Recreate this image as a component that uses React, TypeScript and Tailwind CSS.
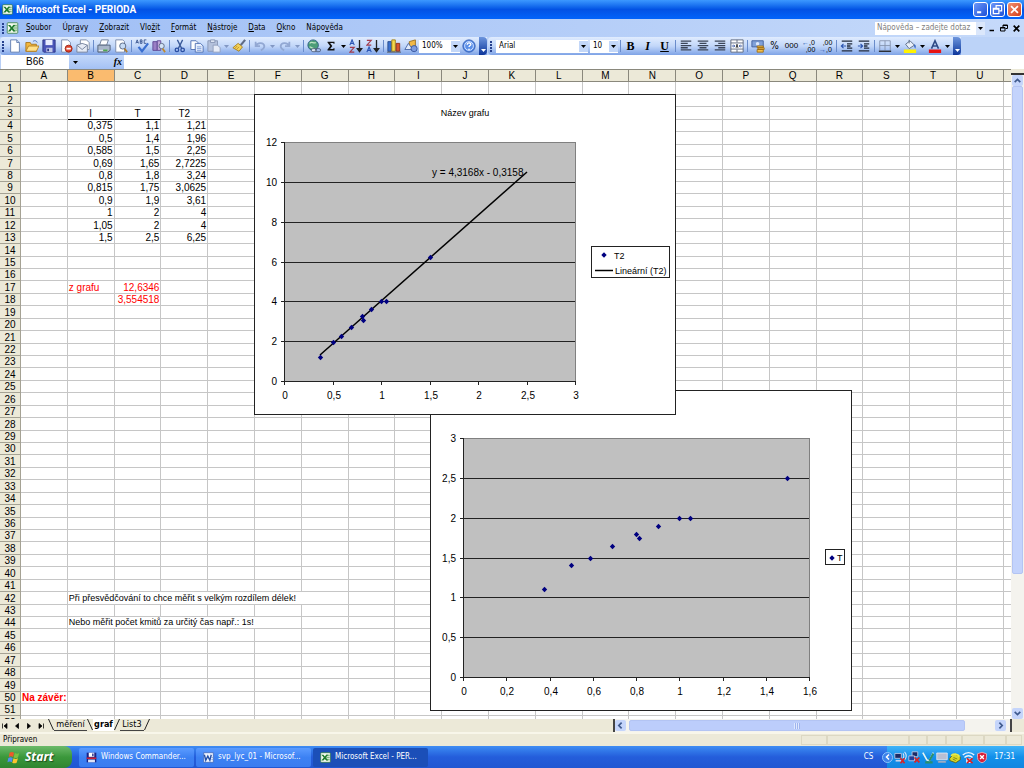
import React from 'react';

const UI = "font-['DejaVu_Sans_Condensed','Noto_Sans',sans-serif]";
const SHEET = "font-['Liberation_Sans',sans-serif]";

const columns = 'ABCDEFGHIJKLMNOPQRSTU'.split('');
const ROW_COUNT = 52;
const ROW_PITCH = 12.43;

interface Cell {
    text: string;
    span?: number;
    className?: string;
}

const measurements = [
    ['0,375', '1,1', '1,21'],
    ['0,5', '1,4', '1,96'],
    ['0,585', '1,5', '2,25'],
    ['0,69', '1,65', '2,7225'],
    ['0,8', '1,8', '3,24'],
    ['0,815', '1,75', '3,0625'],
    ['0,9', '1,9', '3,61'],
    ['1', '2', '4'],
    ['1,05', '2', '4'],
    ['1,5', '2,5', '6,25'],
];

const cells: Record<string, Cell> = {
    B3: { text: 'l', className: 'text-center border-b-black' },
    C3: { text: 'T', className: 'text-center border-b-black' },
    D3: { text: 'T2', className: 'text-center' },
    B17: { text: 'z grafu', className: 'text-left text-[#f00]' },
    C17: { text: '12,6346', className: 'text-right text-[#f00]' },
    C18: { text: '3,554518', className: 'text-right text-[#f00]' },
    B42: { text: 'Při přesvědčování to chce měřit s velkým rozdílem délek!', span: 6, className: 'text-left text-[9px]' },
    B44: { text: 'Nebo měřit počet kmitů za určitý čas např.: 1s!', span: 5, className: 'text-left text-[9px]' },
    A50: { text: 'Na závěr:', className: 'text-left font-bold text-[#f00]' },
};

measurements.forEach((row, i) => {
    row.forEach((text, j) => {
        cells[`${columns[j + 1]}${i + 4}`] = { text, className: 'text-right' };
    });
});

const toNumber = (s: string) => parseFloat(s.replace(',', '.'));
const toLabel = (n: number) => String(Math.round(n * 10) / 10).replace('.', ',');

/* ---------- toolbar icons, 16x16 grid ---------- */

const Icon = ({ children, className = 'w-[14px] h-[14px]' }: { children: React.ReactNode; className?: string }) => (
    <svg viewBox="0 0 16 16" className={className} fill="none" aria-hidden="true">
        {children}
    </svg>
);

const ExcelIcon = ({ className }: { className?: string }) => (
    <Icon className={className}>
        <rect x="1" y="1" width="14" height="14" rx="1" fill="#f3faf0" stroke="#2d7a38" />
        <path d="M9 3h5v10H9z" fill="#cfe6cc" />
        <path d="M9 5h5M9 8h5M9 11h5" stroke="#5ba05e" />
        <path d="M2 4h3l2 2.500L9 4h3L8.500 8l3.500 4.500H9L7 10l-2 2.500H2L5.500 8z" fill="#1c7a2b" />
    </Icon>
);

const icons: Record<string, React.ReactNode> = {
    'Nový': (
        <>
            <path d="M3 1h7l3 3v11H3z" fill="#fff" stroke="#5d79ad" />
            <path d="M10 1v3h3" fill="#cfdcf5" stroke="#5d79ad" />
        </>
    ),
    'Otevřít': (
        <>
            <path d="M1 4h5l1 2h6v8H1z" fill="#f2b63c" stroke="#a8741a" />
            <path d="M4 8h12l-3 6H1z" fill="#ffe08a" stroke="#b27e1e" />
            <path d="M9 3c2-2 4-1 5 1" stroke="#3c66b8" />
        </>
    ),
    'Uložit': (
        <>
            <path d="M1 1h14v14H2l-1-1z" fill="#4a55b8" stroke="#2b3384" />
            <path d="M4 1h8v6H4z" fill="#e9edff" />
            <path d="M5 10h7v5H5z" fill="#c2c9e8" />
            <path d="M6 11h2v3H6z" fill="#2b3384" />
        </>
    ),
    'Oprávnění': (
        <>
            <path d="M3 1h7l3 3v11H3z" fill="#fff" stroke="#7485a8" />
            <circle cx="11" cy="11" r="4" fill="#e0442c" stroke="#9c2414" />
            <path d="M8.500 11h5" stroke="#fff" strokeWidth="2" />
        </>
    ),
    'E-mail': (
        <>
            <path d="M5 1h7l3 3v8H5z" fill="#fff" stroke="#7c89a3" />
            <path d="M1 7l6-2 6 2v8H1z" fill="#e6ebf5" stroke="#6f7d98" />
            <path d="M1 7l6 5 6-5" stroke="#6f7d98" />
        </>
    ),
    'Tisk': (
        <>
            <path d="M5 1h8l-2 6H3z" fill="#fff" stroke="#6b7a94" />
            <path d="M1 7h14v6l-3 2H1z" fill="#a9b6c9" stroke="#4d5b73" />
            <path d="M2 13h10" stroke="#e9eef7" />
            <path d="M7 12h5v2H7z" fill="#4fa650" />
        </>
    ),
    'Náhled': (
        <>
            <path d="M2 1h8l2 2v12H2z" fill="#fff" stroke="#7485a8" />
            <circle cx="10" cy="8" r="3.500" fill="#c7dcf5" stroke="#51617f" />
            <path d="M12 11l3 4" stroke="#ad7a2b" strokeWidth="2" />
        </>
    ),
    'Pravopis': (
        <>
            <path d="M1 5l1.500-4L4 5M1.500 4h2M6 1v4h2V3H6M8 3V1H6M13 1h-2.500v4H13" stroke="#38538f" strokeWidth="1" />
            <path d="M4 9l4 5 7-9" stroke="#3a6fd0" strokeWidth="2.500" />
        </>
    ),
    'Zdroje informací': (
        <>
            <path d="M1 3h5v10H1z" fill="#9a7fc5" stroke="#5c4592" />
            <path d="M6 2h4v11H6z" fill="#c0a8dc" stroke="#5c4592" />
            <circle cx="11" cy="8" r="3" fill="#d4e4f8" stroke="#5a6883" />
            <path d="M12 11l3 4" stroke="#c08a2e" strokeWidth="2" />
        </>
    ),
    'Vyjmout': (
        <>
            <path d="M5 1l5 10M11 1L6 11" stroke="#3a5a99" strokeWidth="1.500" />
            <circle cx="4.500" cy="12.500" r="2" stroke="#2b4fa3" strokeWidth="1.500" />
            <circle cx="11" cy="12.500" r="2" stroke="#2b4fa3" strokeWidth="1.500" />
        </>
    ),
    'Kopírovat': (
        <>
            <path d="M1 2h6l2 2v8H1z" fill="#fff" stroke="#4a6bb0" />
            <path d="M6 5h6l3 3v7H6z" fill="#e7effd" stroke="#4a6bb0" />
            <path d="M8 9h5M8 11h5M8 13h5" stroke="#7c9ad6" />
        </>
    ),
    'Vložit': (
        <>
            <path d="M1 2h11v12H1z" fill="#b4c1dc" stroke="#8795b5" />
            <path d="M4 1h5v3H4z" fill="#dbe3f2" stroke="#8795b5" />
            <path d="M7 7h5l3 3v5H7z" fill="#e7ecf8" stroke="#8f9dbb" />
        </>
    ),
    'Kopírovat formát': (
        <>
            <path d="M15 1l-5 6" stroke="#5e6b86" strokeWidth="2.500" />
            <path d="M7 5l5 4-4 5-7-4z" fill="#f4d35a" stroke="#a47c1d" />
            <path d="M3 11l3-3M5 12l3-3" stroke="#b98d26" />
        </>
    ),
    'Zpět': <path d="M3 3v5h5M3 8c2-4 9-5 10 0 0 3-2 4-4 5" stroke="#92a8d3" strokeWidth="2" />,
    'Znovu': <path d="M13 3v5H8M13 8C11 4 4 3 3 8c0 3 2 4 4 5" stroke="#92a8d3" strokeWidth="2" />,
    'Hypertextový odkaz': (
        <>
            <circle cx="7" cy="7" r="6" fill="#4c9d78" stroke="#2b5f84" />
            <path d="M3 5c3-3 4 1 7-1M3 9c2 0 3 2 5 2" stroke="#bfe3c4" strokeWidth="1.500" />
            <rect x="5" y="11" width="6" height="3.500" rx="1.700" fill="#dfe7f5" stroke="#4f5f7d" />
            <rect x="9.500" y="11" width="6" height="3.500" rx="1.700" stroke="#4f5f7d" />
        </>
    ),
    'AutoSum': <path d="M4 3h8v2.500h-1L10.500 4.500H7L9.500 8 7 11.500h3.500l.5-1h1V13H4v-1l3-4-3-4z" fill="#111" />,
    'Seřadit vzestupně': (
        <>
            <path d="M1 7l2.500-6L6 7M2 5h3" stroke="#2c56b5" strokeWidth="1.300" />
            <path d="M1 9.500h5L1 15h5" stroke="#a33b4c" strokeWidth="1.300" />
            <path d="M12 1v12M9.500 11l2.500 3.500L14.500 11z" stroke="#222" strokeWidth="1.500" fill="#222" />
        </>
    ),
    'Seřadit sestupně': (
        <>
            <path d="M1 1.500h5L1 7h5" stroke="#a33b4c" strokeWidth="1.300" />
            <path d="M1 15l2.500-6L6 15M2 13h3" stroke="#2c56b5" strokeWidth="1.300" />
            <path d="M12 1v12M9.500 11l2.500 3.500L14.500 11z" stroke="#222" strokeWidth="1.500" fill="#222" />
        </>
    ),
    'Průvodce grafem': (
        <>
            <path d="M1 3h4v11H1z" fill="#3c72cf" stroke="#234889" />
            <path d="M5.500 1h4v13h-4z" fill="#f5d94c" stroke="#9a7a16" />
            <path d="M10.500 5h4v9h-4z" fill="#d8542f" stroke="#8c2d13" />
            <path d="M0 15h16" stroke="#555" />
        </>
    ),
    'Kreslení': (
        <>
            <path d="M6 3l7-2v7l-7 2z" fill="#f1b949" stroke="#9c6c16" />
            <path d="M1 12l4-7 5 7z" fill="#dfe9fb" stroke="#4564a5" />
            <circle cx="11.500" cy="11" r="3.500" fill="#7c9be0" stroke="#36549a" />
        </>
    ),
    'Nápověda': (
        <>
            <circle cx="8" cy="8" r="7" fill="#5b8fe8" stroke="#2a57b0" />
            <circle cx="8" cy="8" r="5" stroke="#dce8ff" />
            <path d="M6 6.500c0-3 4.500-2.500 4 0-.3 1-2 1-2 2.500M8 11v1.500" stroke="#fff" strokeWidth="1.600" />
        </>
    ),
    'Zarovnat vlevo': <path d="M2 2.500h12M2 5h8M2 7.500h12M2 10h8M2 12.500h12" stroke="#3c4658" strokeWidth="1.500" />,
    'Zarovnat na střed': <path d="M2 2.500h12M4 5h8M2 7.500h12M4 10h8M2 12.500h12" stroke="#3c4658" strokeWidth="1.500" />,
    'Zarovnat vpravo': <path d="M2 2.500h12M6 5h8M2 7.500h12M6 10h8M2 12.500h12" stroke="#3c4658" strokeWidth="1.500" />,
    'Sloučit a zarovnat na střed': (
        <>
            <path d="M1 1h14v14H1zM1 4.500h14M1 11.500h14M8 1v3M8 12v3" fill="#fff" stroke="#5a6478" />
            <path d="M2 8h3M14 8h-3M4 6.500L5.500 8 4 9.500M12 6.500L10.500 8 12 9.500" stroke="#2e4f9e" />
            <path d="M7 10l1-4 1 4" stroke="#222" />
        </>
    ),
    'Měna': (
        <>
            <path d="M1 2h13v7H1z" fill="#7fa0d8" stroke="#3d5c9b" />
            <circle cx="7.500" cy="5.500" r="2" fill="#dce7fb" />
            <path d="M7 8h7v2H7zM8 10h7v2H8zM7 12h7v3H7z" fill="#f4c04c" stroke="#9b6b17" />
        </>
    ),
    'Zmenšit odsazení': (
        <>
            <path d="M2 2.500h12M8 5.500h6M8 8h4M8 10.500h6M2 13.500h12" stroke="#222b3c" strokeWidth="1.500" />
            <path d="M7 8H2M4 5.500L1.500 8 4 10.500" stroke="#2a54b0" strokeWidth="1.300" />
        </>
    ),
    'Zvětšit odsazení': (
        <>
            <path d="M2 2.500h12M8 5.500h6M8 8h4M8 10.500h6M2 13.500h12" stroke="#222b3c" strokeWidth="1.500" />
            <path d="M1 8h5M4 5.500L6.500 8 4 10.500" stroke="#2a54b0" strokeWidth="1.300" />
        </>
    ),
    'Ohraničení': (
        <>
            <path d="M2 2h12v11M2 2v11M8 2v11M2 7.500h12" stroke="#8391ad" />
            <path d="M1 14h14" stroke="#222" strokeWidth="1.500" />
        </>
    ),
    'Barva výplně': (
        <>
            <path d="M3 6l5-4 5 5-6 4z" fill="#e9f0fc" stroke="#55657f" />
            <path d="M7 5V1" stroke="#55657f" />
            <path d="M13 6c2 1 2 3 1 5-1-2-2-3-1-5z" fill="#3668c4" />
            <path d="M1 12h14v4H1z" fill="#fff200" />
        </>
    ),
    'Barva písma': (
        <>
            <path d="M4 11l4-9 4 9M5.500 8h5" stroke="#2f4a86" strokeWidth="1.800" />
            <path d="M1 12h14v4H1z" fill="#e81313" />
        </>
    ),
};

const Arrow = ({ className = 'text-black' }: { className?: string }) => (
    <svg viewBox="0 0 5 3" className={`w-[5px] h-[3px] ${className}`} aria-hidden="true">
        <path d="M0 0h5L2.500 3z" fill="currentColor" />
    </svg>
);

const ToolButton = ({ name, dropdown, faded }: { name: string; dropdown?: boolean; faded?: boolean }) => (
    <>
        <button title={name} aria-label={name} className="w-[17px] h-4 shrink-0 flex items-center justify-center">
            <Icon>{icons[name]}</Icon>
        </button>
        {dropdown && (
            <button aria-label={`${name} – možnosti`} className="w-2 h-4 shrink-0 flex items-center justify-center">
                <Arrow className={faded ? 'text-[#8298c4]' : 'text-black'} />
            </button>
        )}
    </>
);

const TextButton = ({ name, children, className = '' }: { name: string; children: React.ReactNode; className?: string }) => (
    <button title={name} aria-label={name} className={`w-[17px] h-4 shrink-0 flex items-center justify-center ${className}`}>
        {children}
    </button>
);

const Separator = () => <div className="w-px h-3 ml-[2px] mr-px shrink-0 bg-[#6a8ccb]" />;

const Grip = () => <div className="w-[2px] h-[11px] mx-[2px] shrink-0 bg-[repeating-linear-gradient(#27418e_0_2px,transparent_2px_3px)]" />;

const ToolbarEnd = () => (
    <button aria-label="Možnosti panelu" className="w-[8px] h-[18px] ml-[2px] shrink-0 rounded-r-sm flex items-end justify-center pb-[3px] bg-linear-to-b from-[#6d95dd] to-[#0d349a]">
        <Arrow className="text-white" />
    </button>
);

const Combo = ({ label, value, className }: { label: string; value: string; className: string }) => (
    <label className={`h-[13px] shrink-0 flex items-center bg-white ${className}`}>
        <select aria-label={label} className="appearance-none flex-1 min-w-0 h-[13px] pl-[3px] bg-white outline-none">
            <option>{value}</option>
        </select>
        <span className="w-[9px] h-[11px] flex items-center justify-center bg-[#c3d7f8]">
            <Arrow />
        </span>
    </label>
);

const TitleBar = () => (
    <header className="h-[19px] shrink-0 flex items-center px-[2px] bg-linear-to-b from-[#3c98ff] via-[#0352e4] to-[#0264fb]">
        <ExcelIcon className="w-[11px] h-[11px]" />
        <h1 className="flex-1 ml-[3px] font-[Roboto,sans-serif] font-bold text-[10px] leading-4 text-white">Microsoft Excel - PERIODA</h1>
        <div className="flex gap-[2px]">
            <button aria-label="Minimalizovat" className="w-[15px] h-[15px] border border-white rounded-[3px] bg-linear-to-br from-[#6d97f8] to-[#1c4fd8] text-white flex items-center justify-center">
                <Icon className="w-[11px] h-[11px]"><path d="M3 12h6" stroke="currentColor" strokeWidth="3" /></Icon>
            </button>
            <button aria-label="Obnovit" className="w-[15px] h-[15px] border border-white rounded-[3px] bg-linear-to-br from-[#6d97f8] to-[#1c4fd8] text-white flex items-center justify-center">
                <Icon className="w-[11px] h-[11px]"><path d="M6 6V2.500h8V10h-3M2 6.500h8V14H2zM2 7.500h8" stroke="currentColor" strokeWidth="1.800" /></Icon>
            </button>
            <button aria-label="Zavřít" className="w-[15px] h-[15px] border border-white rounded-[3px] bg-linear-to-br from-[#f09070] to-[#d33a10] text-white flex items-center justify-center">
                <Icon className="w-[11px] h-[11px]"><path d="M3 3l10 10M13 3L3 13" stroke="currentColor" strokeWidth="2.500" /></Icon>
            </button>
        </div>
    </header>
);

// [before accelerator, accelerator, after]
const menu = [
    ['', 'S', 'oubor'],
    ['Úpr', 'a', 'vy'],
    ['', 'Z', 'obrazit'],
    ['Vlo', 'ž', 'it'],
    ['', 'F', 'ormát'],
    ['', 'N', 'ástroje'],
    ['', 'D', 'ata'],
    ['', 'O', 'kno'],
    ['Nápo', 'v', 'ěda'],
];

const MenuBar = () => (
    <nav className="h-[18px] shrink-0 flex items-center bg-linear-to-r from-[#9fbef5] to-[#c6dafa]">
        <Grip />
        <ExcelIcon className="w-[13px] h-[12px] mr-[2px]" />
        <div className="flex gap-px">
            {menu.map(([before, key, after]) => (
                <button key={before + key + after} className="px-[5px] leading-3">
                    {before}<span className="underline">{key}</span>{after}
                </button>
            ))}
        </div>
        <div className="flex-1" />
        <div className="w-[110px] h-[13px] flex items-center bg-white">
            <input aria-label="Nápověda" placeholder="Nápověda – zadejte dotaz" className="flex-1 min-w-0 pl-[2px] outline-none placeholder:text-[#808080]" />
            <span className="w-[9px] h-[13px] flex items-center justify-center bg-[#dbe7fb]"><Arrow /></span>
        </div>
        <div className="flex items-center gap-[4px] pl-[3px] pr-[3px]">
            <button aria-label="Minimalizovat sešit"><Icon className="w-[8px] h-[8px]"><path d="M3 13h9" stroke="#000" strokeWidth="3" /></Icon></button>
            <button aria-label="Obnovit sešit"><Icon className="w-[8px] h-[8px]"><path d="M6 6V2h9v7h-4M1 7h9v7H1zM1 8h9M6 3h9" stroke="#000" strokeWidth="2" /></Icon></button>
            <button aria-label="Zavřít sešit"><Icon className="w-[9px] h-[9px]"><path d="M3 3l10 10M13 3L3 13" stroke="#000" strokeWidth="3" /></Icon></button>
        </div>
    </nav>
);

const Toolbars = () => (
    <div className="h-[18px] shrink-0 flex items-center gap-[1px] overflow-hidden bg-[#bcd3f8]">
        <div role="toolbar" aria-label="Standardní" className="h-[18px] shrink-0 flex items-center rounded-l-sm bg-linear-to-b from-[#e1ecfe] via-[#c2d7f9] to-[#7fa3e6]">
            <Grip />
            <ToolButton name="Nový" />
            <ToolButton name="Otevřít" />
            <ToolButton name="Uložit" />
            <ToolButton name="Oprávnění" />
            <ToolButton name="E-mail" />
            <Separator />
            <ToolButton name="Tisk" />
            <ToolButton name="Náhled" />
            <Separator />
            <ToolButton name="Pravopis" />
            <ToolButton name="Zdroje informací" />
            <Separator />
            <ToolButton name="Vyjmout" />
            <ToolButton name="Kopírovat" />
            <ToolButton name="Vložit" dropdown faded />
            <ToolButton name="Kopírovat formát" />
            <Separator />
            <ToolButton name="Zpět" dropdown faded />
            <ToolButton name="Znovu" dropdown faded />
            <Separator />
            <ToolButton name="Hypertextový odkaz" />
            <ToolButton name="AutoSum" dropdown />
            <ToolButton name="Seřadit vzestupně" />
            <ToolButton name="Seřadit sestupně" />
            <Separator />
            <ToolButton name="Průvodce grafem" />
            <ToolButton name="Kreslení" />
            <Combo label="Lupa" value="100%" className="w-[41px]" />
            <ToolButton name="Nápověda" />
            <ToolbarEnd />
        </div>
        <div role="toolbar" aria-label="Formát" className="h-[18px] shrink-0 flex items-center rounded-l-sm bg-linear-to-b from-[#e1ecfe] via-[#c2d7f9] to-[#7fa3e6]">
            <Grip />
            <Combo label="Písmo" value="Arial" className="w-[92px] mx-[2px]" />
            <Combo label="Velikost písma" value="10" className="w-[28px]" />
            <Separator />
            <TextButton name="Tučné" className="font-['Liberation_Serif',serif] font-bold text-[12px]">B</TextButton>
            <TextButton name="Kurzíva" className="font-['Liberation_Serif',serif] font-bold italic text-[12px]">I</TextButton>
            <TextButton name="Podtržené" className="font-['Liberation_Serif',serif] font-bold underline text-[12px]">U</TextButton>
            <Separator />
            <ToolButton name="Zarovnat vlevo" />
            <ToolButton name="Zarovnat na střed" />
            <ToolButton name="Zarovnat vpravo" />
            <ToolButton name="Sloučit a zarovnat na střed" />
            <Separator />
            <ToolButton name="Měna" />
            <TextButton name="Styl procent" className="text-[10px]">%</TextButton>
            <TextButton name="Oddělovač tisíců" className="font-['Liberation_Sans',sans-serif] text-[8px]">000</TextButton>
            <TextButton name="Přidat desetinné místo" className="flex-col font-['Liberation_Sans',sans-serif] text-[7px] leading-[7px]">
                <span><span className="text-[#2a54b0]">←</span>,0</span><span className="pl-1">,00</span>
            </TextButton>
            <TextButton name="Odebrat desetinné místo" className="flex-col font-['Liberation_Sans',sans-serif] text-[7px] leading-[7px]">
                <span className="pl-1">,00</span><span><span className="text-[#2a54b0]">→</span>,0</span>
            </TextButton>
            <Separator />
            <ToolButton name="Zmenšit odsazení" />
            <ToolButton name="Zvětšit odsazení" />
            <Separator />
            <ToolButton name="Ohraničení" dropdown />
            <ToolButton name="Barva výplně" dropdown />
            <ToolButton name="Barva písma" dropdown />
            <ToolbarEnd />
        </div>
    </div>
);

const FormulaBar = () => (
    <div className={`h-[14px] shrink-0 flex border-l border-[#b9cff5] bg-white text-[10px] ${SHEET}`}>
        <input aria-label="Pole názvů" defaultValue="B66" className="w-[68px] text-center outline-none" />
        <div className="w-[55px] flex items-center justify-between pl-[4px] pr-[2px] bg-linear-to-b from-[#c3d8fa] to-[#a4c1f4]">
            <button aria-label="Seznam názvů"><Arrow /></button>
            <button aria-label="Vložit funkci" className="font-['Liberation_Serif',serif] italic font-bold leading-3">fx</button>
        </div>
        <input aria-label="Řádek vzorců" className="flex-1 min-w-0 outline-none" />
    </div>
);

/* ---------- charts ---------- */

interface ChartProps {
    title?: string;
    label: string;
    points: number[][];
    plot: { x: number; y: number; w: number; h: number };
    xMax: number;
    xStep: number;
    yMax: number;
    yStep: number;
    children?: (px: (v: number) => number, py: (v: number) => number) => React.ReactNode;
}

const Marker = ({ x, y }: { x: number; y: number }) => (
    <path d={`M${x} ${y - 2.7}l2.700 2.700-2.700 2.700-2.700-2.700z`} fill="#000080" />
);

const ScatterChart = ({ title, label, points, plot, xMax, xStep, yMax, yStep, children }: ChartProps) => {
    const px = (v: number) => Math.round(plot.x + (v / xMax) * plot.w);
    const py = (v: number) => Math.round(plot.y + plot.h - (v / yMax) * plot.h);
    const xTicks = Array.from({ length: Math.round(xMax / xStep) + 1 }, (_, i) => i * xStep);
    const yTicks = Array.from({ length: Math.round(yMax / yStep) + 1 }, (_, i) => i * yStep);
    const right = plot.x + plot.w;
    const bottom = plot.y + plot.h;

    return (
        <svg viewBox="0 0 422 321" role="img" aria-label={label} className={`block w-[422px] h-[321px] text-[9px] ${SHEET}`}>
            <rect x="0.5" y="0.5" width="421" height="320" fill="#fff" stroke="#222" />
            {title && <text x="211" y="22" textAnchor="middle">{title}</text>}
            <rect x={plot.x + 0.5} y={plot.y + 0.5} width={plot.w} height={plot.h} fill="#c0c0c0" stroke="#808080" />
            {yTicks.map((t) => (
                <g key={t}>
                    <path d={`M${plot.x - 3} ${py(t) + 0.5}H${t === yMax ? plot.x : right}`} stroke="#222" />
                    <text x={plot.x - 7} y={py(t) + 4} textAnchor="end" className="text-[10px]">{toLabel(t)}</text>
                </g>
            ))}
            {xTicks.map((t) => (
                <g key={t}>
                    <path d={`M${px(t) + 0.5} ${bottom}v4`} stroke="#222" />
                    <text x={px(t) + 1} y={bottom + 18} textAnchor="middle" className="text-[10px]">{toLabel(t)}</text>
                </g>
            ))}
            <path d={`M${plot.x + 0.5} ${plot.y}V${bottom}`} stroke="#222" />
            {children && children(px, py)}
            {points.map(([x, y], i) => <Marker key={i} x={px(x) + 0.5} y={py(y) + 0.5} />)}
        </svg>
    );
};

const lengths = measurements.map((m) => toNumber(m[0]));
const periodPoints = measurements.map((m, i) => [lengths[i], toNumber(m[1])]);
const squaredPoints = measurements.map((m, i) => [lengths[i], toNumber(m[2])]);

const SquaredChart = () => (
    <ScatterChart
        title="Název grafu"
        label="Závislost T2 na délce"
        points={squaredPoints}
        plot={{ x: 30, y: 48, w: 291, h: 239 }}
        xMax={3}
        xStep={0.5}
        yMax={12}
        yStep={2}
    >
        {(px, py) => (
            <>
                <path d={`M${px(0.375)} ${py(4.3168 * 0.375 - 0.3158)}L${px(2.5)} ${py(4.3168 * 2.5 - 0.3158)}`} stroke="#000" strokeWidth="1.500" />
                <text x="178" y="82" className="text-[10px]">y = 4,3168x - 0,3158</text>
                <rect x="337.5" y="152.5" width="78" height="31" fill="#fff" stroke="#222" />
                <Marker x={350} y={161} />
                <text x="360" y="165">T2</text>
                <path d="M341 176.500h18" stroke="#000" strokeWidth="1.500" />
                <text x="361" y="180">Lineární (T2)</text>
            </>
        )}
    </ScatterChart>
);

const PeriodChart = () => (
    <ScatterChart
        label="Závislost T na délce"
        points={periodPoints}
        plot={{ x: 33, y: 48, w: 346, h: 239 }}
        xMax={1.6}
        xStep={0.2}
        yMax={3}
        yStep={0.5}
    >
        {() => (
            <>
                <rect x="395.5" y="159.5" width="19" height="15" fill="#fff" stroke="#222" />
                <Marker x={402} y={168} />
                <text x="407" y="171">T</text>
            </>
        )}
    </ScatterChart>
);

/* ---------- sheet ---------- */

const isTall = (row: number) => Math.ceil(row * ROW_PITCH) - Math.ceil((row - 1) * ROW_PITCH) === 13;

const SheetRow = ({ row }: { row: number }) => {
    const tds: React.ReactNode[] = [];
    for (let c = 0; c < columns.length; c++) {
        const cell = cells[`${columns[c]}${row}`];
        tds.push(
            <td key={c} colSpan={cell?.span} className={`p-0 px-px border-r border-b border-[#c6c6c6] whitespace-nowrap ${cell?.className || ''}`}>
                {cell?.text}
            </td>
        );
        if (cell?.span) c += cell.span - 1;
    }
    return (
        <tr className={isTall(row) ? 'h-[13px]' : 'h-[12px]'}>
            <th scope="row" className="p-0 border-r border-b border-[#a5a294] bg-[#ece9d8] font-normal text-center">{row}</th>
            {tds}
            <td className="p-0 border-b border-[#c6c6c6]" />
        </tr>
    );
};

const ScrollArrow = ({ d, label }: { d: string; label: string }) => (
    <button aria-label={label} className="w-[11px] h-[11px] shrink-0 rounded-[2px] bg-[#c5d5fb] flex items-center justify-center">
        <Icon className="w-[9px] h-[9px]"><path d={d} stroke="#3f5a8e" strokeWidth="3" /></Icon>
    </button>
);

const Sheet = () => (
    <main className="flex-1 min-h-0 flex bg-white">
        <div className="relative flex-1 min-w-0 overflow-hidden">
            <table className={`w-full table-fixed border-separate border-spacing-0 text-[10px] leading-[11px] ${SHEET}`}>
                <colgroup>
                    <col className="w-[21px]" />
                    {columns.map((c) => <col key={c} />)}
                    <col className="w-[7px]" />
                </colgroup>
                <thead>
                    <tr className="h-[13px]">
                        <td className="p-0 border border-l-0 border-[#8a887c] bg-[#ece9d8]" />
                        {columns.map((c) => (
                            <th key={c} scope="col" className={`p-0 border-y border-r border-[#8a887c] font-normal text-center ${c === 'B' ? 'bg-[#fabb6f]' : 'bg-[#ece9d8]'}`}>
                                {c}
                            </th>
                        ))}
                        <td className="p-0 border-y border-[#8a887c] bg-[#ece9d8]" />
                    </tr>
                </thead>
                <tbody>
                    {Array.from({ length: ROW_COUNT }, (_, i) => <SheetRow key={i} row={i + 1} />)}
                </tbody>
            </table>
            <div className="absolute left-[430px] top-[321px]"><PeriodChart /></div>
            <div className="absolute left-[254px] top-[25px]"><SquaredChart /></div>
        </div>
        <div className="w-[13px] shrink-0 flex flex-col items-center bg-[#f4f3ee]">
            <div className="w-full h-[6px] shrink-0 border-b-2 border-[#333] bg-[#ece9d8]" />
            <ScrollArrow d="M3 11l5-5 5 5" label="Nahoru" />
            <div className="w-[11px] h-[75%] rounded-[2px] border border-[#b3c4f3] bg-[#c3d3fc]" />
            <div className="flex-1" />
            <ScrollArrow d="M3 5l5 5 5-5" label="Dolů" />
        </div>
    </main>
);

const Slash = ({ back }: { back?: boolean }) => (
    <svg viewBox="0 0 6 12" className="w-[6px] h-[12px] shrink-0" aria-hidden="true">
        <path d={back ? 'M0.500 0L5.500 11' : 'M5.500 0L0.500 11'} stroke="#222" />
    </svg>
);

const navShapes: [string, string][] = [
    ['První list', 'M3 3v10M12 3L6 8l6 5z'],
    ['Předchozí list', 'M11 3L5 8l6 5z'],
    ['Další list', 'M5 3l6 5-6 5z'],
    ['Poslední list', 'M13 3v10M4 3l6 5-6 5z'],
];

const TabBar = () => (
    <div className="h-[13px] shrink-0 flex bg-[#ece9d8]">
        <div className="w-[48px] flex items-center justify-between pr-[2px]">
            {navShapes.map(([name, d]) => (
                <button key={name} aria-label={name} className="w-[10px] h-[10px] flex items-center justify-center">
                    <Icon className="w-[8px] h-[8px]"><path d={d} fill="#000" stroke="#000" strokeWidth="1.500" /></Icon>
                </button>
            ))}
        </div>
        <div role="tablist" className="flex h-[12px] leading-[11px] text-[9px]">
            <Slash back />
            <button role="tab" className="w-[33px] border-b border-[#444]">měření</button>
            <Slash back />
            <button role="tab" aria-selected="true" className="w-[21px] flex justify-center bg-white font-bold">graf</button>
            <Slash />
            <button role="tab" className="w-[24px] flex justify-center border-b border-[#444]">List3</button>
            <Slash />
        </div>
        <div className="flex-1" />
        <div className="w-[39%] flex items-center bg-[#f4f3ee] border-x-2 border-[#444] mr-[12px] pr-[4px]">
            <ScrollArrow d="M10 3L5 8l5 5" label="Vlevo" />
            <div className="w-[86%] h-[11px] ml-[3px] rounded-[2px] border border-[#b3c4f3] bg-[#bccdfb] flex items-center justify-center">
                <span className="w-[6px] h-[6px] bg-[repeating-linear-gradient(90deg,#dfe8fe_0_1px,#9fb4ee_1px_2px)]" />
            </div>
            <div className="flex-1" />
            <ScrollArrow d="M6 3l5 5-5 5" label="Vpravo" />
        </div>
    </div>
);

const StatusBar = () => {
    const pane = 'h-[10px] border border-[#dcd8c3]';
    return (
        <footer className="h-[14px] shrink-0 flex items-center border-t-2 border-[#f8f6ea] bg-[#ece9d8] pl-[3px] pr-[2px]">
            <span className="flex-1">Připraven</span>
            <span className={`w-[26px] ${pane}`} />
            <span className={`w-[82px] ${pane}`} />
            <span className={`w-[18px] ${pane}`} />
            <span className={`w-[19px] ${pane}`} />
            <span className={`w-[16px] ${pane}`} />
            <span className={`w-[22px] ${pane}`} />
            <span className={`w-[22px] ${pane}`} />
            <span className={`w-[16px] ${pane}`} />
        </footer>
    );
};

const TaskButton = ({ icon, text, active }: { icon: React.ReactNode; text: string; active?: boolean }) => (
    <button className={`w-[115px] h-[19px] shrink-0 flex items-center gap-[4px] pl-[7px] rounded-[2px] text-white whitespace-nowrap ${active ? 'bg-[#1b4fb8]' : 'bg-linear-to-b from-[#5b9bff] via-[#3c81f3] to-[#3a7cf0]'}`}>
        {icon}
        <span>{text}</span>
    </button>
);

const Taskbar = () => (
    <div className="h-[22px] shrink-0 flex items-center bg-linear-to-b from-[#3f8cf3] via-[#245ddb] to-[#2157d2]">
        <button className="w-[72px] h-[22px] shrink-0 flex items-center gap-[4px] pl-[7px] rounded-r-lg bg-linear-to-b from-[#6cba6a] via-[#3b983b] to-[#2f8530] text-white">
            <Icon className="w-[14px] h-[14px]">
                <path d="M3 3c2-1 3-1 5 0L7 8C5 7 4 7 2 8z" fill="#f0582a" />
                <path d="M9 3.500c2 1 3 1 5 0l-1.500 5c-2 1-3 1-5 0z" fill="#7ac142" />
                <path d="M1.500 9c2-1 3-1 5 0l-1 5c-2-1-3-1-5 0z" fill="#4f8df0" />
                <path d="M7.500 9.500c2 1 3 1 5 0l-1.500 5c-2 1-3 1-5 0z" fill="#fbc52d" />
            </Icon>
            <span className="font-['Noto_Sans',sans-serif] font-bold italic text-[12px] leading-4 [text-shadow:1px_1px_1px_#1d4d1e]">Start</span>
        </button>
        <div className="flex-1 flex gap-[2px] pl-[7px]">
            <TaskButton
                text="Windows Commander..."
                icon={
                    <Icon className="w-[11px] h-[11px]">
                        <path d="M1 1h14v14H1z" fill="#1a2385" />
                        <path d="M4 1h8v6H4z" fill="#fff" />
                        <path d="M9 2h2v4H9z" fill="#1a2385" />
                        <path d="M1 8h14v2H1z" fill="#e3202c" />
                        <path d="M3 11h10v4H3z" fill="#dfe3f5" />
                    </Icon>
                }
            />
            <TaskButton
                text="svp_lyc_01 - Microsof..."
                icon={
                    <Icon className="w-[11px] h-[11px]">
                        <path d="M1 1h14v14H1z" fill="#f0f5ff" stroke="#3a60b0" />
                        <path d="M2 4l2 8 3-6 3 6 2-8" stroke="#2450a8" strokeWidth="2" />
                        <path d="M12 8h3M12 11h3" stroke="#7c9bd6" />
                    </Icon>
                }
            />
            <TaskButton active text="Microsoft Excel - PER..." icon={<ExcelIcon className="w-[11px] h-[11px]" />} />
        </div>
        <span className="text-white mr-[14px]">CS</span>
        <div className="h-[22px] flex items-center gap-[1px] pr-[9px] bg-linear-to-b from-[#3fb4f8] via-[#1290ea] to-[#1286e0] text-white">
            <button aria-label="Zobrazit skryté ikony" className="w-[11px] h-[11px] rounded-full bg-[#3b82ea] border border-[#8ec4fb] flex items-center justify-center -ml-[5px]">
                <Icon className="w-[8px] h-[8px]"><path d="M10 3L5 8l5 5" stroke="#fff" strokeWidth="3" /></Icon>
            </button>
            <Icon className="w-[13px] h-[13px]">
                <path d="M1 3h8v6H1z" fill="#1c2c66" stroke="#c6d2ea" />
                <path d="M2 11h7v2H2z" fill="#c6d2ea" />
                <path d="M11 3c1.500 2 1.500 4 0 6M13 1c2.500 3 2.500 7 0 10" stroke="#d9e6f8" strokeWidth="1.300" />
                <path d="M8 9l5 6M13 9l-5 6" stroke="#e02020" strokeWidth="2" />
            </Icon>
            <Icon className="w-[13px] h-[13px]">
                <path d="M5 1h7v6H5z" fill="#1c2c66" stroke="#c6d2ea" />
                <path d="M1 6h7v6H1z" fill="#24409a" stroke="#c6d2ea" />
                <path d="M8 8l6 6M14 8l-6 6" stroke="#e02020" strokeWidth="2" />
            </Icon>
            <Icon className="w-[13px] h-[13px]">
                <path d="M1 2l5 9 3 1 5-10" stroke="#e8f3ef" strokeWidth="2" />
                <path d="M9 12l5-9M4 14h9" stroke="#2a8f6c" strokeWidth="2.500" />
            </Icon>
            <Icon className="w-[12px] h-[13px]">
                <path d="M1 2h14v9H1z" fill="#b9bfd2" stroke="#eef1f8" />
                <path d="M3 13h10v1.500H3z" fill="#dde2ee" stroke="#8f98ae" />
            </Icon>
            <Icon className="w-[12px] h-[13px]">
                <path d="M1 9l6-6 8 4v4l-6 4-8-3z" fill="#d8d82a" stroke="#59590c" />
                <path d="M3 6c2-4 9-3 11 1" stroke="#e9ea4a" strokeWidth="2.500" />
                <path d="M6 8l5 2M5 10l4 2" stroke="#6b6b10" />
            </Icon>
            <Icon className="w-[13px] h-[13px]">
                <path d="M1 5c4-4 10-4 14 0M3 8c3-3 7-3 10 0M6 10h4v4H6z" stroke="#eef4ff" strokeWidth="1.800" />
                <path d="M6 9l7 6M13 9l-7 6" stroke="#e02020" strokeWidth="2" />
            </Icon>
            <Icon className="w-[12px] h-[13px]">
                <path d="M8 1l6 2v5c0 4-3 6-6 7-3-1-6-3-6-7V3z" fill="#d8203a" stroke="#f1c2c8" />
                <path d="M5.500 5l5 5M10.500 5l-5 5" stroke="#fff" strokeWidth="1.800" />
            </Icon>
            <time className="ml-[5px]">17:31</time>
        </div>
    </div>
);

const App: React.FC = () => (
    <div className={`h-screen flex flex-col overflow-hidden bg-[#ece9d8] text-black text-[8px] leading-3 ${UI}`}>
        <TitleBar />
        <MenuBar />
        <Toolbars />
        <FormulaBar />
        <Sheet />
        <TabBar />
        <StatusBar />
        <Taskbar />
    </div>
);

export default App;
